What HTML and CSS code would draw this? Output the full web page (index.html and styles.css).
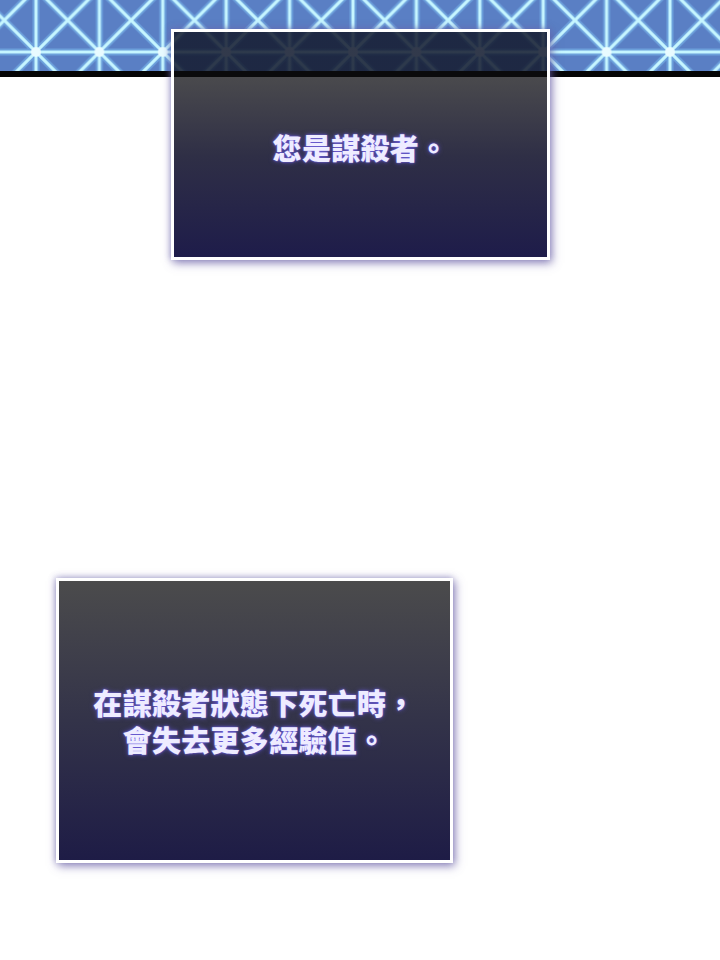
FILE: index.html
```html
<!DOCTYPE html>
<html lang="zh-Hant">
<head>
<meta charset="utf-8">
<link rel="stylesheet" href="styles.css">
</head>
<body>
<div class="page">
  <div class="banner">
    <svg class="lattice" width="720" height="71" viewBox="0 0 720 71" xmlns="http://www.w3.org/2000/svg">
      <defs>
        <pattern id="grid" x="36" y="52" width="63.4" height="63.4" patternUnits="userSpaceOnUse">
          <g stroke="#86d2ff" stroke-width="7" stroke-opacity="0.4" fill="none">
            <path d="M0 0V63.4M63.4 0V63.4M0 0H63.4M0 63.4H63.4M0 0L63.4 63.4M63.4 0L0 63.4"/>
          </g>
          <g stroke="#c6f6ff" stroke-width="3" fill="none">
            <path d="M0 0V63.4M63.4 0V63.4M0 0H63.4M0 63.4H63.4M0 0L63.4 63.4M63.4 0L0 63.4"/>
          </g>
          <circle cx="0" cy="0" r="5" fill="#eefcff" fill-opacity="0.85"/>
          <circle cx="63.4" cy="0" r="5" fill="#eefcff" fill-opacity="0.85"/>
          <circle cx="0" cy="63.4" r="5" fill="#eefcff" fill-opacity="0.85"/>
          <circle cx="63.4" cy="63.4" r="5" fill="#eefcff" fill-opacity="0.85"/>
        </pattern>
      </defs>
      <rect width="720" height="71" fill="#5a7fc4"/>
      <rect width="720" height="71" fill="url(#grid)"/>
    </svg>
  </div>
  <div class="card card-one">
    <p class="msg">您是謀殺者。</p>
  </div>
  <div class="card card-two">
    <div class="msg-group">
      <p class="msg">在謀殺者狀態下死亡時，</p>
      <p class="msg">會失去更多經驗值。</p>
    </div>
  </div>
</div>
</body>
</html>
```
FILE: styles.css
```css
html, body {
  margin: 0;
  padding: 0;
  background: #ffffff;
}
.page {
  width: 720px;
  height: 960px;
  position: relative;
  overflow: hidden;
  background: #ffffff;
}
.banner {
  height: 71px;
  border-bottom: 6px solid #050505;
  background: #5a7fc4;
}
.lattice {
  display: block;
}
.card {
  box-sizing: border-box;
  border: 3px solid #ffffff;
  display: flex;
  align-items: center;
  justify-content: center;
  box-shadow: 2px 3px 9px rgba(96, 86, 160, 0.7), -1px -1px 6px rgba(120, 110, 180, 0.45);
}
.card-one {
  position: relative;
  margin: -48px 0 0 171px;
  width: 379px;
  height: 231px;
  padding-top: 5px;
  background: linear-gradient(to bottom,
    rgba(20, 26, 46, 0.86) 0,
    rgba(20, 26, 46, 0.86) 39px,
    #0a0a0c 39px,
    #0a0a0c 45px,
    #4a4a4d 45px,
    #2f2f46 55%,
    #1e1c4a 100%);
}
.card-two {
  margin: 318px 0 0 56px;
  width: 397px;
  height: 285px;
  background: linear-gradient(to bottom, #4b4b4c 0%, #333349 50%, #1e1c46 100%);
}
.msg-group {
  display: flex;
  flex-direction: column;
  gap: 4px;
}
.msg {
  margin: 0;
  font-family: "Noto Sans CJK TC", "Noto Sans CJK SC", sans-serif;
  font-weight: 900;
  font-size: 29px;
  line-height: 33px;
  text-align: center;
  color: #eeecff;
  text-shadow: 0 0 2px #7868f0, 0 0 5px rgba(110, 96, 240, 0.7);
  letter-spacing: 0.3px;
}
```
